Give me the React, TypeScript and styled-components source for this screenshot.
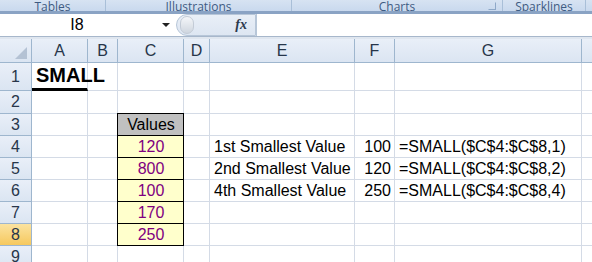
import styled, { createGlobalStyle } from "styled-components";

const GlobalStyle = createGlobalStyle`
    html, body {
        margin: 0;
        padding: 0;
        background: #ffffff;
        overflow: hidden;
    }
`

const Page = styled.div`
    width: 592px;
    height: 262px;
    overflow: hidden;
    display: flex;
    flex-direction: column;
    font-family: "Liberation Sans", Arial, sans-serif;
    background: #fff;

    & > * {
        flex: none;
    }
`

const RibbonStrip = styled.div`
    height: 11px;
    display: flex;
    background: linear-gradient(#d7e3f2, #c9d9ee);
    border-bottom: 3px solid #8aa3c4;
    overflow: hidden;
`

const RibbonGroup = styled.div<{ $w: number }>`
    width: ${p => p.$w}px;
    flex: none;
    position: relative;
    display: flex;
    justify-content: center;
    align-items: flex-end;
    border-right: 1px solid #a9bfd8;
    font-family: "Open Sans", "DejaVu Sans", sans-serif;
    font-size: 12px;
    line-height: 15px;
    color: #3e5b82;
`

const GroupLabel = styled.span`
    margin-bottom: -3px;
`

const Launcher = styled.span`
    position: absolute;
    right: 6px;
    bottom: 1px;
    width: 6px;
    height: 6px;
    border: 1px solid #8ea8c8;
    border-left-color: transparent;
    border-top-color: transparent;
`

const FormulaBar = styled.div`
    height: 22px;
    display: flex;
    align-items: stretch;
    background: #fff;
    border-bottom: 1px solid #a7b7cb;
`

const NameBox = styled.div`
    width: 176px;
    display: flex;
    align-items: center;
    font-size: 16px;
    color: #000;
`

const NameText = styled.span`
    width: 154px;
    text-align: center;
`

const DropArrow = styled.span`
    width: 0;
    height: 0;
    border-left: 4px solid transparent;
    border-right: 4px solid transparent;
    border-top: 4px solid #222;
    margin-left: 8px;
`

const FxPill = styled.div`
    width: 80px;
    display: flex;
    align-items: center;
    justify-content: space-between;
    background: linear-gradient(#e9eff7, #dde6f2);
    border: 1px solid #b7c6d8;
    border-radius: 11px 0 0 11px;
    padding: 0 8px 0 3px;
    box-sizing: border-box;
`

const Knob = styled.span`
    width: 12px;
    height: 16px;
    border-radius: 7px;
    background: linear-gradient(#f4f6f9, #cfd6df);
    border: 1px solid #c3cbd6;
`

const FxLabel = styled.span`
    font-family: "Liberation Serif", "Times New Roman", serif;
    font-style: italic;
    font-weight: bold;
    font-size: 14px;
    color: #2b3a4e;
`

const FormulaInput = styled.div`
    flex: 1;
    border-left: 1px solid #b7c6d8;
`

const Gap = styled.div`
    height: 2px;
    background: #dfe6ef;
`

const Sheet = styled.div`
    display: grid;
    grid-template-columns: 32px 56px 30px 66px 26px 145px 40px 187px 40px;
    grid-template-rows: 24px 28px 23px 22px 22px 22px 22px 22px 22px 22px;
`

const Corner = styled.div`
    background: linear-gradient(#e9eff8, #dbe5f2);
    border-right: 1px solid #9eb6ce;
    border-bottom: 1px solid #9eb6ce;
    box-sizing: border-box;
    position: relative;
`

const CornerMark = styled.span`
    position: absolute;
    right: 4px;
    bottom: 3px;
    width: 0;
    height: 0;
    border-left: 12px solid transparent;
    border-bottom: 12px solid #b4c2d4;
`

const Header = styled.div<{ $active?: boolean }>`
    display: flex;
    align-items: center;
    justify-content: center;
    box-sizing: border-box;
    background: ${p => p.$active
        ? "linear-gradient(#fbe3a0, #f6c85e)"
        : "linear-gradient(#e9eff8, #dbe5f2)"};
    border-right: 1px solid #9eb6ce;
    border-bottom: 1px solid #9eb6ce;
    font-size: 16px;
    color: #27364a;
`

const Cell = styled.div<{
    $align?: "left" | "right" | "center"
    $bg?: string
    $color?: string
    $box?: boolean
    $top?: boolean
}>`
    display: flex;
    align-items: flex-end;
    justify-content: ${p => p.$align === "right" ? "flex-end" : p.$align === "center" ? "center" : "flex-start"};
    padding: 0 3px 1px 4px;
    box-sizing: border-box;
    white-space: nowrap;
    overflow: visible;
    font-size: 16px;
    line-height: 19px;
    color: ${p => p.$color || "#000"};
    background: ${p => p.$bg || "transparent"};
    border-right: 1px solid ${p => p.$box ? "#000" : "#d4dbe6"};
    border-bottom: 1px solid ${p => p.$box ? "#000" : "#d4dbe6"};
    ${p => p.$box ? "border-left: 1px solid #000; margin-left: -1px;" : ""}
    ${p => p.$box && p.$top ? "border-top: 1px solid #000; margin-top: -1px;" : ""}
`

const TitleCell = styled.div`
    display: flex;
    align-items: flex-end;
    padding: 0 0 1px 4px;
    box-sizing: border-box;
    border-bottom: 3px solid #000;
    border-right: 1px solid #d4dbe6;
    font-size: 20px;
    line-height: 23px;
    font-weight: bold;
    white-space: nowrap;
    overflow: visible;
`

const cols = ["A", "B", "C", "D", "E", "F", "G", ""]

const values = [120, 800, 100, 170, 250]

const results: Record<number, [string, number, string]> = {
    4: ["1st Smallest Value", 100, "=SMALL($C$4:$C$8,1)"],
    5: ["2nd Smallest Value", 120, "=SMALL($C$4:$C$8,2)"],
    6: ["4th Smallest Value", 250, "=SMALL($C$4:$C$8,4)"],
}

const renderRow = (r: number) => {
    const out = [<Header key={`h${r}`} $active={r === 8}>{r}</Header>]
    // A
    if (r === 1) {
        out.push(<TitleCell key="a1">SMALL</TitleCell>)
    } else {
        out.push(<Cell key={`a${r}`} />)
    }
    out.push(<Cell key={`b${r}`} />)
    // C
    if (r === 3) {
        out.push(<Cell key="c3" $box $top $align="center" $bg="#c0c0c0">Values</Cell>)
    } else if (r >= 4 && r <= 8) {
        out.push(
            <Cell key={`c${r}`} $box $align="center" $bg="#ffffcc" $color="#800080">
                {values[r - 4]}
            </Cell>
        )
    } else {
        out.push(<Cell key={`c${r}`} />)
    }
    out.push(<Cell key={`d${r}`} />)
    const res = results[r]
    out.push(<Cell key={`e${r}`}>{res ? res[0] : ""}</Cell>)
    out.push(<Cell key={`f${r}`} $align="right">{res ? res[1] : ""}</Cell>)
    out.push(<Cell key={`g${r}`}>{res ? res[2] : ""}</Cell>)
    out.push(<Cell key={`x${r}`} />)
    return out
}

export default function App() {
    return (
        <Page>
            <GlobalStyle />
            <RibbonStrip>
                <RibbonGroup $w={105}><GroupLabel>Tables</GroupLabel></RibbonGroup>
                <RibbonGroup $w={185}><GroupLabel>Illustrations</GroupLabel></RibbonGroup>
                <RibbonGroup $w={210}>
                    <GroupLabel>Charts</GroupLabel>
                    <Launcher />
                </RibbonGroup>
                <RibbonGroup $w={82}><GroupLabel>Sparklines</GroupLabel></RibbonGroup>
            </RibbonStrip>
            <FormulaBar>
                <NameBox>
                    <NameText>I8</NameText>
                    <DropArrow />
                </NameBox>
                <FxPill>
                    <Knob />
                    <FxLabel>fx</FxLabel>
                </FxPill>
                <FormulaInput />
            </FormulaBar>
            <Gap />
            <Sheet>
                <Corner><CornerMark /></Corner>
                {cols.map((c, i) => <Header key={`col${i}`}>{c}</Header>)}
                {[1, 2, 3, 4, 5, 6, 7, 8, 9].map(r => renderRow(r))}
            </Sheet>
        </Page>
    )
}
